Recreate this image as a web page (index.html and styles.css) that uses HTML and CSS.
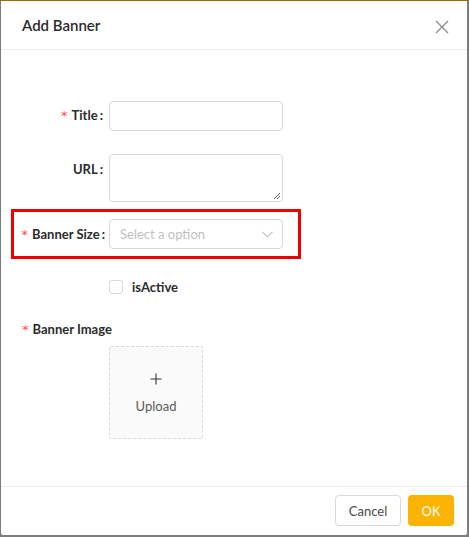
FILE: index.html
```html
<!DOCTYPE html>
<html>
<head>
<meta charset="utf-8">
<link rel="stylesheet" href="styles.css">
</head>
<body>
<div class="modal">
  <div class="header">
    <span class="modal-title">Add Banner</span>
    <svg class="close" width="14" height="14" viewBox="0 0 14 14"><path d="M1 1L13 13M13 1L1 13" stroke="#8c8c8c" stroke-width="1.3" fill="none"/></svg>
  </div>
  <div class="body">
    <div class="row row-title">
      <label class="label"><span class="req">*</span>Title<span class="colon">:</span></label>
      <div class="input"></div>
    </div>
    <div class="row row-url">
      <label class="label"><span>URL</span><span class="colon">:</span></label>
      <div class="textarea">
        <svg class="grip" width="8" height="8" viewBox="0 0 8 8"><path d="M7 1L1 7M7 4L4 7" stroke="#555" stroke-width="0.9"/></svg>
      </div>
    </div>
    <div class="row row-size">
      <label class="label"><span class="req">*</span>Banner Size<span class="colon">:</span></label>
      <div class="select">
        <span class="placeholder">Select a option</span>
        <svg class="chev" width="11" height="7" viewBox="0 0 11 7"><path d="M0.5 0.8L5.5 5.8L10.5 0.8" stroke="#bfbfbf" stroke-width="1.1" fill="none"/></svg>
      </div>
    </div>
    <div class="row row-check">
      <span class="checkbox"></span>
      <span class="check-label">isActive</span>
    </div>
    <div class="image-label"><span class="req">*</span>Banner Image</div>
    <div class="upload">
      <svg class="plus" width="12" height="12" viewBox="0 0 12 12"><path d="M6 0.5V11.5M0.5 6H11.5" stroke="#333" stroke-width="1.1"/></svg>
      <span class="upload-text">Upload</span>
    </div>
  </div>
  <div class="footer">
    <button class="btn btn-cancel">Cancel</button>
    <button class="btn btn-ok">OK</button>
  </div>
</div>
</body>
</html>
```

FILE: styles.css
```css
html, body {
  margin: 0;
  padding: 0;
}
body {
  width: 469px;
  height: 537px;
  background: #7d7d7d;
  border-top: 1px solid #9a6a00;
  box-sizing: border-box;
  font-family: Lato, "Open Sans", sans-serif;
  color: #262626;
  overflow: hidden;
}
.modal {
  margin: 0 2px 0 1px;
  height: 534px;
  background: #fff;
  display: flex;
  flex-direction: column;
  border-radius: 0 0 2px 2px;
}
.header {
  height: 48px;
  border-bottom: 1px solid #ececec;
  display: flex;
  align-items: center;
  justify-content: space-between;
  padding: 0 18px 0 21px;
}
.modal-title {
  font-size: 15px;
  font-weight: 600;
  color: #2b2b2b;
  margin-top: -1px;
}
.close {
  margin-top: 3px;
}
.body {
  flex: 1;
  padding-top: 50px;
}
.row {
  display: flex;
  align-items: center;
}
.label {
  width: 108px;
  box-sizing: border-box;
  padding-right: 6px;
  text-align: right;
  font-size: 13px;
  font-weight: 700;
  color: #2b2b2b;
  line-height: 30px;
  white-space: nowrap;
}
.req {
  color: #ff4d4f;
  font-weight: 400;
  font-size: 13px;
  margin-right: 4px;
  font-family: "DejaVu Sans", sans-serif;
}
.colon {
  margin-left: 2px;
}
.input {
  width: 174px;
  height: 30px;
  box-sizing: border-box;
  border: 1px solid #d9d9d9;
  border-radius: 4px;
}
.row-url {
  margin-top: 23px;
  align-items: flex-start;
}
.textarea {
  position: relative;
  width: 174px;
  height: 48px;
  box-sizing: border-box;
  border: 1px solid #d9d9d9;
  border-radius: 4px;
}
.grip {
  position: absolute;
  right: 1px;
  bottom: 1px;
}
.row-size {
  margin: 7px 0 0 10px;
  width: 290px;
  height: 50px;
  box-sizing: border-box;
  border: 3px solid #ee0000;
}
.row-size .label {
  width: 95px;
  padding-right: 4px;
}
.select {
  width: 174px;
  height: 30px;
  box-sizing: border-box;
  border: 1px solid #d9d9d9;
  border-radius: 4px;
  display: flex;
  align-items: center;
  justify-content: space-between;
  padding: 0 9px 0 10px;
}
.placeholder {
  font-size: 13px;
  color: #bfbfbf;
}
.row-check {
  margin-top: 20px;
  padding-left: 108px;
}
.checkbox {
  width: 14px;
  height: 14px;
  box-sizing: border-box;
  border: 1px solid #d9d9d9;
  border-radius: 3px;
}
.check-label {
  margin-left: 9px;
  font-size: 13px;
  font-weight: 700;
  color: #2b2b2b;
}
.image-label {
  margin-top: 25px;
  padding-left: 21px;
  font-size: 13px;
  font-weight: 700;
  color: #2b2b2b;
  line-height: 18px;
}
.upload {
  margin: 7px 0 0 108px;
  width: 94px;
  height: 93px;
  box-sizing: border-box;
  border: 1px dashed #d9d9d9;
  border-radius: 2px;
  background: #fafafa;
  display: flex;
  flex-direction: column;
  align-items: center;
  justify-content: flex-start;
  padding-top: 26px;
}
.upload-text {
  margin-top: 13px;
  font-size: 13px;
  line-height: 16px;
  color: #595959;
}
.footer {
  border-top: 1px solid #ececec;
  height: 49px;
  box-sizing: border-box;
  display: flex;
  justify-content: flex-end;
  align-items: flex-start;
  padding: 8px 13px 0 0;
  gap: 7px;
}
.btn {
  height: 31px;
  border-radius: 4px;
  font-family: inherit;
  font-size: 13px;
  padding: 0;
  cursor: pointer;
}
.btn-cancel {
  width: 66px;
  background: #fff;
  border: 1px solid #d9d9d9;
  color: #4a4a4a;
}
.btn-ok {
  width: 46px;
  background: #fcb400;
  border: none;
  color: #fff;
}
```
